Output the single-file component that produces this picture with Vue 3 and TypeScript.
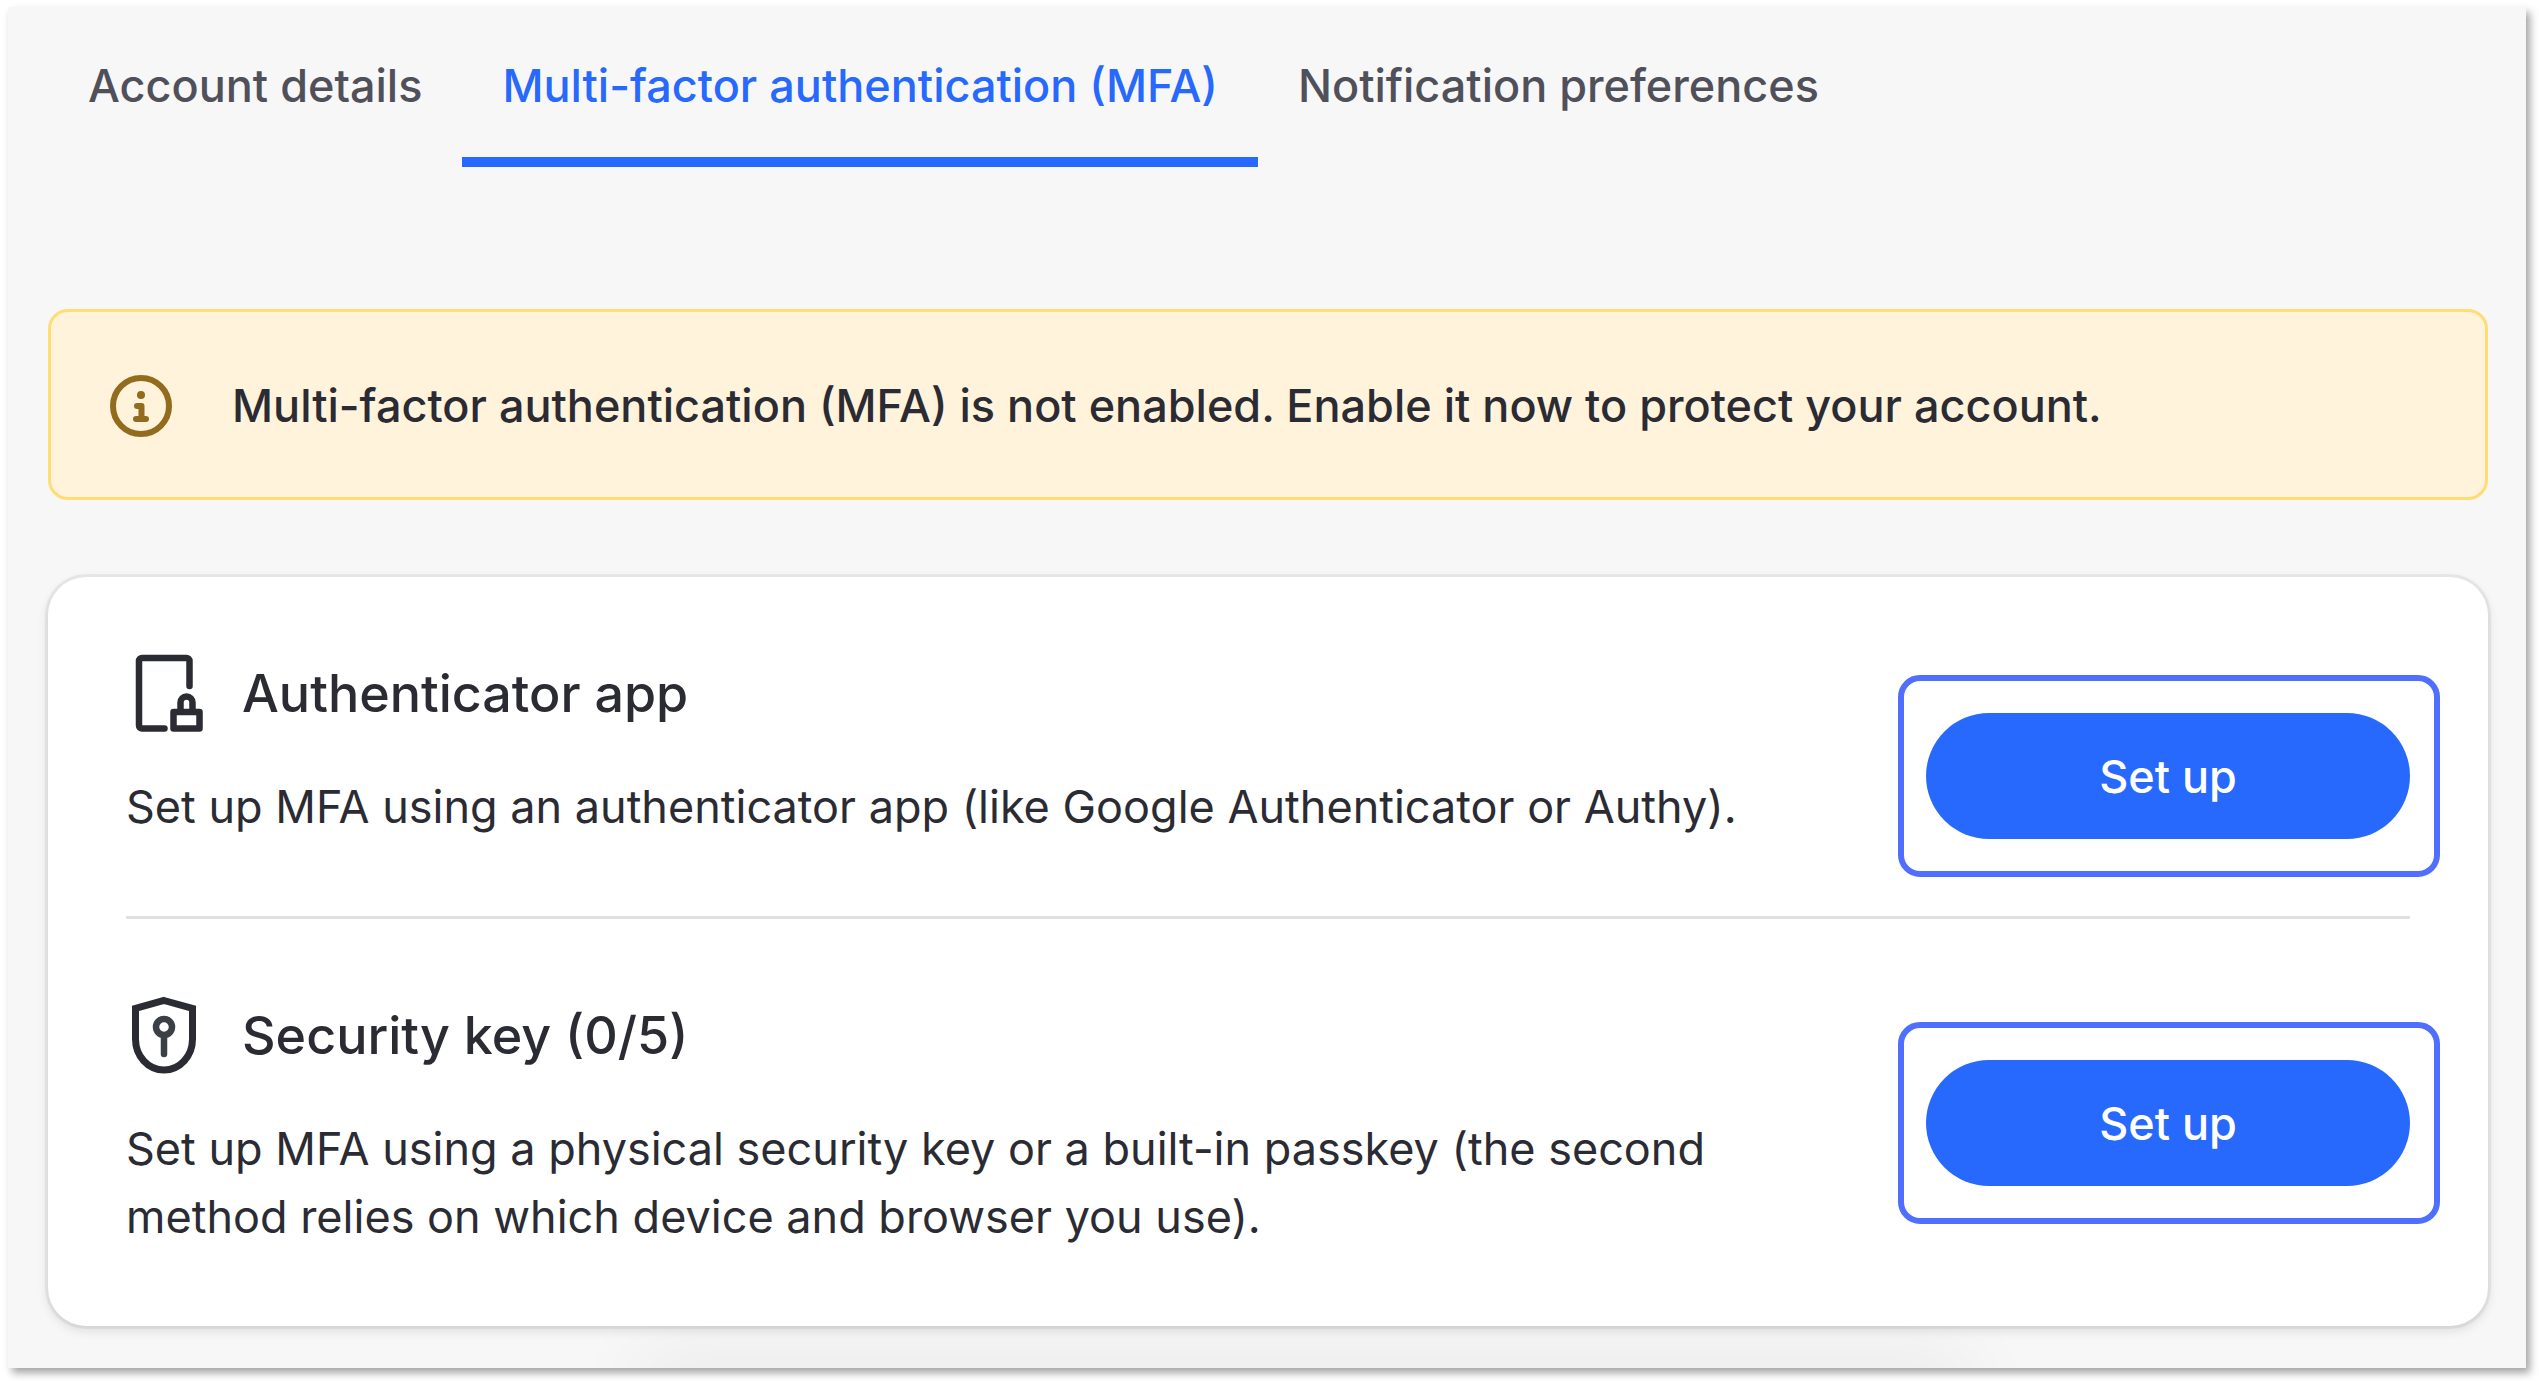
<script setup lang="ts">
import { ref } from 'vue'

type Method = {
  id: 'app' | 'key'
  title: string
  description: string
}

const tabs: string[] = ['Account details', 'Multi-factor authentication (MFA)', 'Notification preferences']
const activeTab = ref<number>(1)

const methods: Method[] = [
  {
    id: 'app',
    title: 'Authenticator app',
    description: 'Set up MFA using an authenticator app (like Google Authenticator or Authy).',
  },
  {
    id: 'key',
    title: 'Security key (0/5)',
    description:
      'Set up MFA using a physical security key or a built-in passkey (the second method relies on which device and browser you use).',
  },
]
</script>

<template>
  <main class="frame">
    <nav class="tabs" aria-label="Account settings">
      <a
        v-for="(tab, index) in tabs"
        :key="tab"
        href="#"
        class="tab"
        :class="{ active: index === activeTab }"
        :aria-current="index === activeTab ? 'page' : undefined"
        @click.prevent="activeTab = index"
        >{{ tab }}</a
      >
    </nav>

    <div class="banner" role="status">
      <svg class="banner-icon" viewBox="0 0 62 62" aria-hidden="true">
        <circle cx="31" cy="31" r="28" fill="none" stroke="#926b1c" stroke-width="6" />
        <circle cx="31" cy="20" r="4" fill="#926b1c" />
        <path
          d="M27 31H31.500V44M26 44H36"
          fill="none"
          stroke="#926b1c"
          stroke-width="6"
          stroke-linecap="round"
          stroke-linejoin="round"
        />
      </svg>
      <p class="banner-text">
        Multi-factor authentication (MFA) is not enabled. Enable it now to protect your account.
      </p>
    </div>

    <div class="card">
      <section v-for="method in methods" :key="method.id" class="method" :class="method.id">
        <div class="info">
          <div class="heading">
            <svg v-if="method.id === 'app'" class="icon" viewBox="0 0 80 80" aria-hidden="true">
              <g fill="none" stroke="#2b2b33" stroke-width="6.500" stroke-linecap="round" stroke-linejoin="round">
                <path d="M63.500 33V8a3 3 0 0 0-3-3H16a3 3 0 0 0-3 3V72.500a3 3 0 0 0 3 3H38.500" />
                <path d="M47.500 59H73.500V75.500H47.500Z" />
                <path d="M54.500 58V49.500a6 6 0 0 1 12 0V58" />
              </g>
            </svg>
            <svg v-else class="icon" viewBox="0 0 80 80" aria-hidden="true">
              <path
                d="M38 5.500L66.500 13.500V44C66.500 61 54 75 38 75S9.500 61 9.500 44V13.500Z"
                fill="none"
                stroke="#2b2b33"
                stroke-width="7"
              />
              <circle cx="38" cy="32" r="8" fill="none" stroke="#3a4046" stroke-width="6.500" />
              <path d="M38 42V59" stroke="#3a4046" stroke-width="6.500" stroke-linecap="round" />
            </svg>
            <h2 class="title">{{ method.title }}</h2>
          </div>
          <p class="description">{{ method.description }}</p>
        </div>
        <div class="action">
          <button type="button" class="setup">Set up</button>
        </div>
      </section>
    </div>
  </main>
</template>

<style>
body {
  margin: 0;
  background: #fff;
}
</style>

<style scoped>
.frame {
  position: relative;
  isolation: isolate;
  overflow: hidden;
  margin: 7px 13px 13px 8px;
  padding: 0 38px 42px 40px;
  background: #f7f7f7;
  box-shadow: 4px 5px 8px rgba(0, 0, 0, 0.36);
  font-family: Inter, 'Liberation Sans', sans-serif;
  font-size: 45px;
  line-height: 68px;
  color: #2b2b33;
}

/* soft shade rising from the lower edge */
.frame::after {
  content: '';
  position: absolute;
  z-index: -1;
  top: 100%;
  left: 25%;
  right: 22%;
  height: 40px;
  box-shadow: 0 0 80px rgba(0, 0, 0, 0.09);
}

.tabs {
  display: flex;
}

.tab {
  padding: 45px 40px 37px;
  border-bottom: 10px solid transparent;
  color: #50505a;
  font-weight: 500;
  text-decoration: none;
}

.tab.active {
  border-color: #2869fd;
  color: #2869fd;
}

.banner {
  display: flex;
  align-items: center;
  gap: 60px;
  margin-top: 142px;
  padding: 60px 59px 57px;
  border: 3px solid #ffdd74;
  border-radius: 20px;
  background: #fff3dc;
}

.banner-icon {
  flex: none;
  width: 62px;
  height: 62px;
}

.banner-text {
  margin: 0;
  font-weight: 500;
}

.card {
  margin-top: 77px;
  padding: 0 78px;
  border-radius: 38px;
  background: #fff;
  box-shadow:
    0 0 0 3px rgba(0, 0, 0, 0.05),
    0 4px 12px rgba(20, 20, 40, 0.12);
}

.method {
  display: flex;
  align-items: flex-start;
  justify-content: space-between;
  padding: 76px 0 75px;
}

.method.app {
  border-bottom: 3px solid #e1e1e1;
}

.info {
  flex: 1;
  max-width: 1640px;
}

.heading {
  display: flex;
  align-items: center;
  gap: 36px;
}

.icon {
  flex: none;
  width: 80px;
  height: 80px;
}

.title {
  margin: 0;
  padding-top: 2px;
  font-size: 52px;
  font-weight: 500;
}

.description {
  margin: 40px 0 0;
}

.action {
  position: relative;
  flex: none;
  margin-top: 60px;
}

.method.key .action {
  align-self: center;
  margin-top: 0;
}

/* highlight ring around the control */
.action::after {
  content: '';
  position: absolute;
  inset: -38px -30px -38px -28px;
  border: 6px solid #516fff;
  border-radius: 22px;
  pointer-events: none;
}

.setup {
  display: block;
  width: 484px;
  height: 126px;
  padding: 2px 0 0;
  border: 0;
  border-radius: 63px;
  background: #2869fd;
  color: #fff;
  font: inherit;
  font-weight: 500;
  cursor: pointer;
}
</style>
